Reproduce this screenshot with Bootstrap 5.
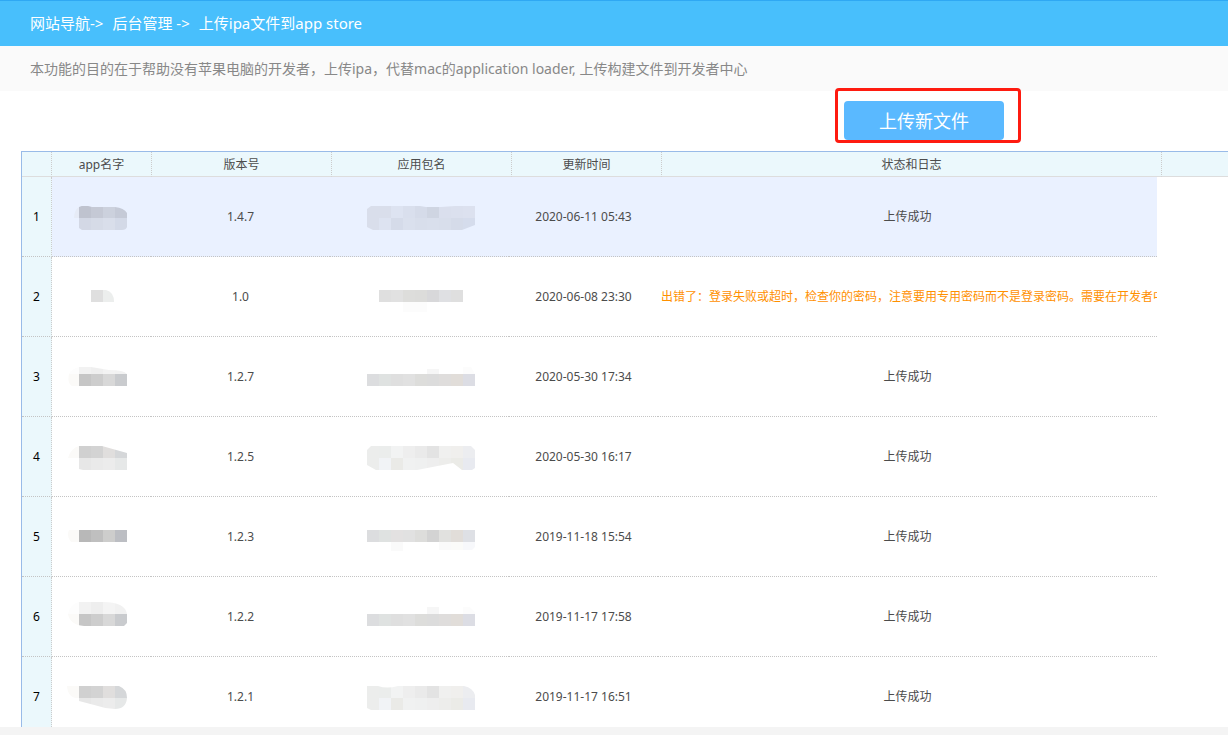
<!DOCTYPE html>
<html lang="zh-CN">
<head>
<meta charset="utf-8">
<meta name="viewport" content="width=device-width, initial-scale=1">
<title>上传ipa文件到app store</title>
<link href="https://cdn.jsdelivr.net/npm/bootstrap@5.3.0/dist/css/bootstrap.min.css" rel="stylesheet">
<style>
  body { font-family: "Noto Sans", "Noto Sans CJK SC", sans-serif; font-size: 12px; line-height: 18px; color: #4c4c4c; }
  .top-bar { background: #48bffc; border-top: 1px solid #2fa8f3; font-size: 15px; line-height: 45px; padding-left: 30px; gap: 9px; }
  .intro { background: #fafafa; color: #888; font-size: 14px; line-height: 45px; padding-left: 30px; }
  .tools { padding: 10px 224px 11px 0; }
  .upload-btn, .upload-btn:hover { width: 160px; height: 39px; padding: 2px 0 0; border: 0; border-radius: 4px; background: #5ab9ff; color: #fff; font-size: 18px; line-height: 37px; }
  .callout-box { position: absolute; top: -13px; right: -17px; bottom: -3px; left: -9px; border: 3px solid #fe1b10; border-radius: 4px; pointer-events: none; }
  .grid-panel { margin-left: 21px; border-left: 1px solid #99bbe8; border-top: 1px solid #99bbe8; min-height: 0; }
  .grid-table { table-layout: fixed; border-collapse: separate; border-spacing: 0; margin: 0; }
  .grid-table th, .grid-table td { padding: 0; text-align: center; vertical-align: middle; font-weight: 400; }
  .grid-table.grid-head th { height: 25px; padding-top: 2px; background: #ebf8fc; border-bottom: 1px solid #ddd; }
  .grid-head th:not(:last-child) { border-right: 1px dotted #ccc; }
  .grid-rows { width: 1135px; }
  .grid-rows th, .grid-rows td { height: 80px; border-bottom: 1px dotted #c4c4c4; }
  .grid-rows th { background: #ebf8fc; border-right: 1px dotted #ccc; color: #000; }
  .grid-rows .picked td { background: #eaf1ff; }
  .grid-rows .fail-note { color: #ff9000; text-align: left; padding-left: 3px; white-space: nowrap; overflow: hidden; }
  .grid-rows svg { display: block; margin: 0 auto; }
  .scroll-track { height: 8px; background: #f4f4f4; }
</style>
</head>
<body class="d-flex flex-column vh-100 overflow-hidden">
  <header class="top-bar d-flex flex-shrink-0 text-white text-nowrap">
    <span><a href="#" class="text-white text-decoration-none">网站导航</a>-&gt;</span>
    <span><a href="#" class="text-white text-decoration-none">后台管理</a> -&gt;</span>
    <span>上传ipa文件到app store</span>
  </header>
  <p class="intro flex-shrink-0 m-0 text-nowrap">本功能的目的在于帮助没有苹果电脑的开发者，上传ipa，代替mac的application loader, 上传构建文件到开发者中心</p>
  <div class="tools d-flex justify-content-end flex-shrink-0">
    <div class="position-relative">
      <button type="button" class="btn upload-btn d-block">上传新文件</button>
      <span class="callout-box"></span>
    </div>
  </div>
  <main class="grid-panel flex-fill overflow-hidden">
    <table class="grid-table grid-head w-100" aria-label="列标题">
      <colgroup><col style="width:30px"><col style="width:100px"><col style="width:180px"><col style="width:180px"><col style="width:150px"><col style="width:500px"><col></colgroup>
      <thead><tr><th></th><th>app名字</th><th>版本号</th><th>应用包名</th><th>更新时间</th><th>状态和日志</th><th></th></tr></thead>
    </table>
    <table class="grid-table grid-rows" aria-label="上传记录">
      <colgroup><col style="width:30px"><col style="width:99px"><col style="width:179px"><col style="width:179px"><col style="width:149px"><col style="width:499px"></colgroup>
      <tbody>
        <tr class="picked"><th scope="row">1</th><td data-name></td><td>1.4.7</td><td data-pack></td><td>2020-06-11 05:43</td><td>上传成功</td></tr>
        <tr><th scope="row">2</th><td data-name></td><td>1.0</td><td data-pack></td><td>2020-06-08 23:30</td><td class="fail-note">出错了：登录失败或超时，检查你的密码，注意要用专用密码而不是登录密码。需要在开发者中</td></tr>
        <tr><th scope="row">3</th><td data-name></td><td>1.2.7</td><td data-pack></td><td>2020-05-30 17:34</td><td>上传成功</td></tr>
        <tr><th scope="row">4</th><td data-name></td><td>1.2.5</td><td data-pack></td><td>2020-05-30 16:17</td><td>上传成功</td></tr>
        <tr><th scope="row">5</th><td data-name></td><td>1.2.3</td><td data-pack></td><td>2019-11-18 15:54</td><td>上传成功</td></tr>
        <tr><th scope="row">6</th><td data-name></td><td>1.2.2</td><td data-pack></td><td>2019-11-17 17:58</td><td>上传成功</td></tr>
        <tr><th scope="row">7</th><td data-name></td><td>1.2.1</td><td data-pack></td><td>2019-11-17 16:51</td><td>上传成功</td></tr>
      </tbody>
    </table>
  </main>
  <div class="scroll-track flex-shrink-0"></div>

<script src="https://cdn.jsdelivr.net/npm/bootstrap@5.3.0/dist/js/bootstrap.bundle.min.js"></script>
<script>
  // Pixelated masks over private names: strips are [x, y, colours of 12px tiles], clip is the brushed outline.
  const dark = '#c6c6c6 #cdcdcd #d8d8d8 #c9cbce', mid = '#fbfaf8 #d0d0d0 #d3d3d3 #e0dedd #d5d7d9', pale = '#e7e7e7 #eaeaea #ececec #e6e8e8';
  const line = '#dcdddf #dfe2e1 #dfdfdf #e1e1e1 #dddddb #dcdcdc #dfdddc #e1ddd9 #dcdde4';
  const upper = '#ecedec #ebedec #f2f3f3 #eeeeee #eaeaea #e3e3e3 #f0f0ef #f0efed #ecedf0', lower = '#ecedec #f1f3f6 #eaeae7 #f0f1f1 #eff0f0 #eeeeee #ededeb #ebebe7 #e8eaf0';
  const names = [
    [[[67,29,'#e6ebf6 #bfc3cf #c5c9d5 #ccd1dd #c5cad7'],[79,41,'#d3d8e5 #d6dbe7 #d9deea #d3d9e7']], 'M74 41Q74 33 79 30Q84 27 92 30H115Q124 31 127 36V50Q126 53 122 53H82L79 51V41Z'],
    [[[91,33,'#dfdfdf #eceeed']], 'M91 33H106Q114 35 114 45H91Z'],
    [[[67,25,'#fdfdfd #f2f2f2 #efefef #f3f3f3 #f2f2f2'],[67,37,'#fbfaf8 ' + dark]], 'M69 37Q71 32 79 30H91L109 33Q124 33 127 37V49H72Q67 46 69 37Z'],
    [[[67,29,mid],[79,41,pale]], 'M68 41Q71 31 79 29H102L127 36V53H83L79 52V41Z'],
    [[[67,33,'#fbfaf8 #b8b8b8 #bfbfbf #cdcdcc #bcbec3']], 'M69 33H127V45H71Q66 39 69 33Z'],
    [[[67,25,'#fdfdfd #f2f2f2 #eeeeee #f4f4f4 #f1f1f1'],[67,37,'#fbfaf8 ' + dark]], 'M68 37Q70 27 79 25H103Q125 25 127 37V46L124 49H84Q70 48 68 37Z'],
    [[[67,29,mid],[79,41,pale]], 'M67 29H119Q127 32 127 41Q126 52 115 52Q106 52 98 49L79 44V41Q68 42 67 29Z']
  ];
  const packs = [
    [[[367,29,'#d9deeb #d9deeb #dde3f1 #d9dfed #d5dbe9 #cfd5e2 #dadfed #dbe0ee #dce1ef'],[367,41,'#d9deeb #dde3f1 #d5dbe9 #dae0ed #d8deeb #d9dfec #d8deeb #d5dbe9 #d5dcec']], 'M367 32L371 29H420L426 30H441L455 29H475V48L462 53H373L367 50Z'],
    [[[379,33,'#dfdfdf #e1e1e1 #dddddb #dcdcda #d8d8da #dfe0e3 #dfdfdf'],[403,45,'#fcfcfc #fcfcfc']], 'M379 33H463V45H427V55H403V45H379Z'],
    [[[427,25,'#f6f6f6'],[463,25,'#fcfcfc'],[367,37,line]], 'M367 37H427V32H439V37H463V30H471L475 37V49H367Z'],
    [[[367,29,upper],[367,41,lower]], 'M367 33L371 29H471L475 33V51L472 53H462L453 46L417 53H376L367 48Z'],
    [[[367,33,'#dcdddf #dfe2e1 #e3e1e1 #e1e1e1 #dddddb #d3d3d3 #e1e1df #e1ddd9 #dee0e5'],[391,45,'#fafafa'],[439,45,'#fafafa #fbfbf9 #f7f8fb']], 'M367 33H475V50L472 53H439V45H403V54H391V45H367Z'],
    [[[427,25,'#f6f6f6'],[463,25,'#fcfcfc'],[367,37,line]], 'M367 37H427V30H439V37H463V30H470L475 35V49H367Z'],
    [[[367,29,upper],[367,41,lower]], 'M367 29H378Q387 32 398 29H464Q473 31 475 38V53H371L367 51Z']
  ];
  function mask(kind, items, x, w) {
    document.querySelectorAll('td[data-' + kind + ']').forEach((cell, i) => {
      const [strips, outline] = items[i], id = kind + i;
      const tiles = strips.map(([sx, sy, colours]) => colours.split(' ').map((c, n) =>
        `<rect x="${sx + n * 12}" y="${sy}" width="12" height="12" fill="${c}"/>`).join('')).join('');
      cell.innerHTML = `<svg width="${w}" height="47" viewBox="${x} 16 ${w} 47" shape-rendering="crispEdges" aria-hidden="true"><clipPath id="${id}"><path d="${outline}"/></clipPath><g clip-path="url(#${id})">${tiles}</g></svg>`;
    });
  }
  mask('name', names, 66, 71);
  mask('pack', packs, 360, 119);
</script>
</body>
</html>
